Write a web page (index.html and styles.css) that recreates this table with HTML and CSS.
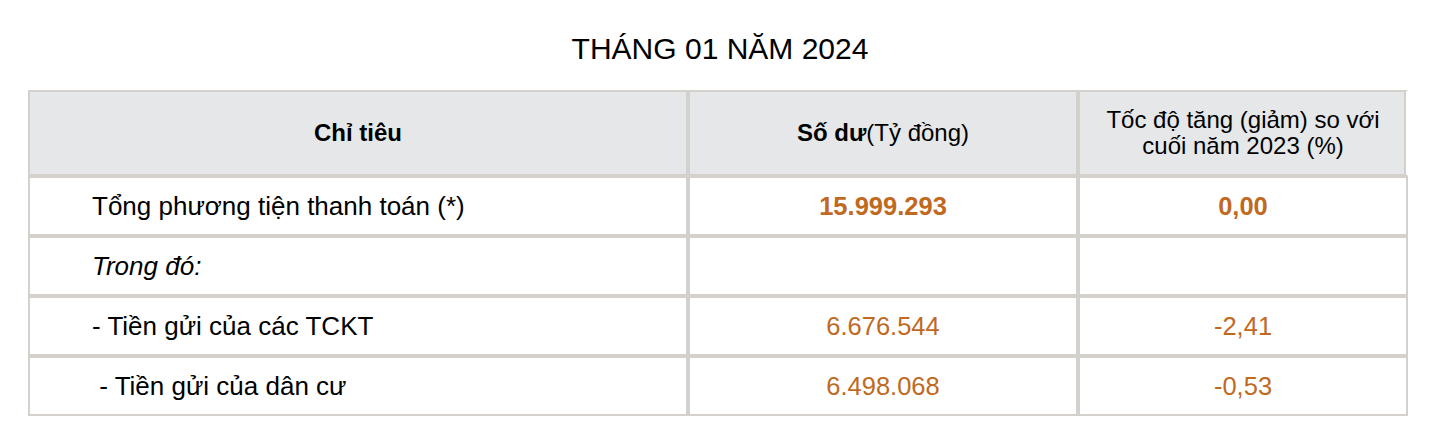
FILE: index.html
```html
<!DOCTYPE html>
<html lang="vi">
<head>
<meta charset="utf-8">
<title>Tháng 01 năm 2024</title>
<link rel="stylesheet" href="styles.css">
</head>
<body>
<h1 class="title">THÁNG 01 NĂM 2024</h1>
<table class="stats">
  <colgroup>
    <col class="c1">
    <col class="c2">
    <col class="c3">
  </colgroup>
  <thead>
    <tr class="head-row">
      <th class="h-name">Chỉ tiêu</th>
      <th class="h-bal"><b>Số dư</b>(Tỷ đồng)</th>
      <th class="h-rate">Tốc độ tăng (giảm) so với cuối năm 2023 (%)</th>
    </tr>
  </thead>
  <tbody>
    <tr class="row">
      <td class="name">Tổng phương tiện thanh toán (*)</td>
      <td class="num strong">15.999.293</td>
      <td class="num strong">0,00</td>
    </tr>
    <tr class="row">
      <td class="name italic">Trong đó:</td>
      <td class="num"></td>
      <td class="num"></td>
    </tr>
    <tr class="row">
      <td class="name">- Tiền gửi của các TCKT</td>
      <td class="num">6.676.544</td>
      <td class="num">-2,41</td>
    </tr>
    <tr class="row">
      <td class="name">&nbsp;- Tiền gửi của dân cư</td>
      <td class="num">6.498.068</td>
      <td class="num">-0,53</td>
    </tr>
  </tbody>
</table>
</body>
</html>
```
FILE: styles.css
```css
html, body {
  margin: 0;
  padding: 0;
  background: #ffffff;
}

body {
  font-family: "Liberation Sans", Arial, sans-serif;
  color: #000000;
}

.title {
  margin: 0;
  padding-top: 8px;
  height: 82px;
  line-height: 82px;
  font-size: 30px;
  font-weight: normal;
  text-align: center;
  color: #000000;
}

.stats {
  margin-left: 28px;
  width: 1380px;
  table-layout: fixed;
  border-collapse: separate;
  border-spacing: 0;
}

.c1 { width: 660px; }
.c2 { width: 390px; }
.c3 { width: 330px; }

.stats th,
.stats td {
  box-sizing: border-box;
  border: 2px solid #d4d0cc;
  vertical-align: middle;
}

.head-row { height: 86px; }

.stats th {
  background: #e6e7e9;
  font-size: 24px;
  line-height: 26px;
  text-align: center;
  font-weight: normal;
  padding: 0 16px;
}

.stats th.h-name { font-weight: bold; }

.stats th.h-bal b { font-weight: bold; }

.stats th.h-rate {
  padding: 0 20px;
  border-right-color: #ffffff;
  box-shadow: inset -2px 0 0 #d4d0cc;
}

.row { height: 60px; }

.stats td {
  font-size: 26px;
  line-height: 30px;
  padding: 0;
}

.stats td.name {
  padding-left: 62px;
  white-space: pre;
}

.stats td.italic { font-style: italic; }

.stats td.num {
  font-size: 25.5px;
  text-align: center;
  color: #c0691f;
}

.stats td.strong { font-weight: bold; }
```
